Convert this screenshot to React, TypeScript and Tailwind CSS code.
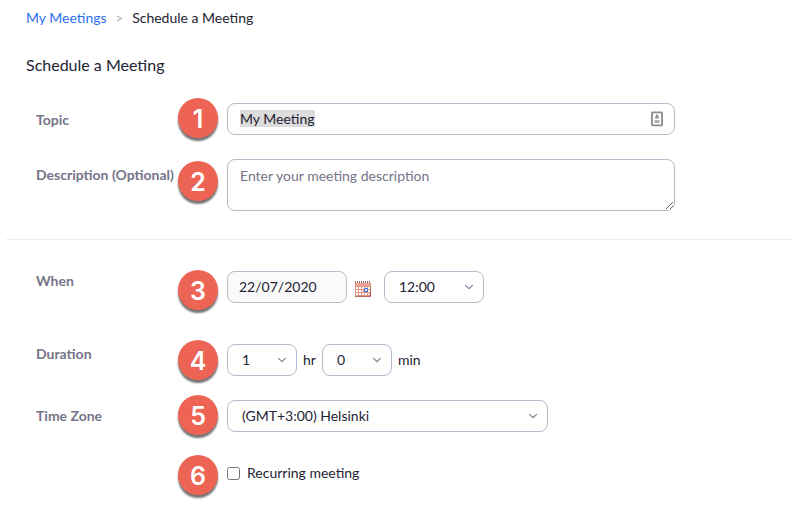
import React, { useState } from 'react';

type FieldRowProps = {
  label?: string;
  step: number;
  rowClass: string;
  labelClass?: string;
  badgeClass?: string;
  fieldClass?: string;
  children: React.ReactNode;
};

function FieldRow({ label, step, rowClass, labelClass = '', badgeClass = '', fieldClass = '', children }: FieldRowProps) {
  return (
    <div className={`flex items-start pl-9 ${rowClass}`}>
      <div className={`w-[142px] shrink-0 whitespace-nowrap text-sm leading-5 font-bold text-[#747487] ${labelClass}`}>
        {label}
      </div>
      <div className={`w-[49px] shrink-0 ${badgeClass}`}>
        <div className="flex size-10 items-center justify-center rounded-full bg-[#ed6454] pt-[3px] font-['Inter','Liberation_Sans',sans-serif] text-[25px] leading-none font-semibold text-white shadow-[0_3px_2px_rgba(0,0,0,0.55)]">
          {step}
        </div>
      </div>
      <div className={fieldClass}>{children}</div>
    </div>
  );
}

function Chevron() {
  return (
    <svg width="10" height="6" viewBox="0 0 10 6" fill="none" stroke="#85859b" strokeWidth="1.3" strokeLinecap="round">
      <path d="M1.5 1.4L5 4.7l3.5-3.3" />
    </svg>
  );
}

function SelectBox({ value, className }: { value: string; className: string }) {
  return (
    <button
      type="button"
      className={`flex h-8 items-center justify-between rounded-lg border border-[#babacc] bg-white pr-[9px] pl-3.5 ${className}`}
    >
      <span>{value}</span>
      <Chevron />
    </button>
  );
}

function ContactIcon() {
  return (
    <svg width="12" height="16" viewBox="0 0 12 16">
      <rect x="1" y="1.4" width="10" height="13" rx="0.5" fill="#fff" stroke="#8b8b8b" strokeWidth="1.8" />
      <path d="M5 3.5h2v2h1v2H4v-2h1z" fill="#8f8f8f" />
      <path d="M3.5 9h5v3h-5z" fill="#b0b0b0" />
    </svg>
  );
}

function CalendarIcon() {
  return (
    <svg width="16" height="16" viewBox="0 0 16 16">
      <rect y="1" width="16" height="15" fill="#e29488" />
      <rect x="1" y="2" width="14" height="3" fill="#eda297" />
      <path d="M0 1h16" stroke="#fff" strokeWidth="2" />
      <path d="M0 1h16" stroke="#8f6a66" strokeWidth="2" strokeDasharray="1 1" />
      <path
        d="M1 6h2v2H1zM4 6h2v2H4zM7 6h2v2H7zM10 6h2v1h-2zM13 6h2v2h-2zM1 9h2v2H1zM4 9h2v2H4zM7 9h1v2H7zM13 9h2v2h-2zM1 12h2v2H1zM4 12h2v2H4zM7 12h2v2H7zM10 12h2v2h-2zM13 12h1v2h-1z"
        fill="#fff"
      />
      <rect x="9.5" y="7.5" width="3" height="3" fill="#dce8ff" stroke="#4a76dc" />
      <path d="M15.5 5v11M0 15.5h16" stroke="#b56c5e" />
    </svg>
  );
}

export default function App() {
  const [recurring, setRecurring] = useState(false);

  return (
    <div className="h-[507px] w-[792px] overflow-hidden bg-white font-['Lato',sans-serif] text-sm text-[#232333]">
      {/* Breadcrumb */}
      <nav className="flex h-9 items-center pl-[26px]">
        <a href="#" className="text-[#2d6ff0]">My Meetings</a>
        <span className="mx-[9px] text-[13px] text-[#a9a9b4]">&gt;</span>
        <span>Schedule a Meeting</span>
      </nav>

      <h1 className="h-[62px] pt-[17px] pl-[26px] text-base leading-6">Schedule a Meeting</h1>

      <FieldRow label="Topic" step={1} rowClass="h-[61px]" labelClass="pt-3" fieldClass="pt-[5px]">
        <div className="flex h-8 w-[448px] items-center justify-between rounded-lg border border-[#babacc] pr-[11px] pl-3">
          <span className="mb-px bg-[#dcdcdc] leading-[17px]">My Meeting</span>
          <ContactIcon />
        </div>
      </FieldRow>

      <FieldRow label="Description (Optional)" step={2} rowClass="h-20" labelClass="pt-1.5" badgeClass="pt-0.5">
        <textarea
          placeholder="Enter your meeting description"
          className="block h-[52px] w-[448px] rounded-lg border border-[#babacc] px-3 py-1.5 leading-5 placeholder:text-[#747487]"
        />
      </FieldRow>

      <hr className="ml-1.5 border-t border-[#ededf4]" />

      <FieldRow label="When" step={3} rowClass="h-[100px] pt-[30px]" labelClass="pt-px" fieldClass="flex items-center pt-px">
        <div className="flex h-8 w-[120px] items-center rounded-lg border border-[#babacc] bg-[#fafafa] pl-[11px]">22/07/2020</div>
        <div className="mx-2 pr-[5px] pt-[3px]">
          <CalendarIcon />
        </div>
        <SelectBox value="12:00" className="w-[100px]" />
      </FieldRow>

      <FieldRow label="Duration" step={4} rowClass="h-[55px]" labelClass="pt-1" fieldClass="flex items-center pt-1">
        <SelectBox value="1" className="w-[70px]" />
        <span className="w-[25px] pl-1.5">hr</span>
        <SelectBox value="0" className="w-[70px]" />
        <span className="pl-1.5">min</span>
      </FieldRow>

      <FieldRow label="Time Zone" step={5} rowClass="h-[60px]" labelClass="pt-[11px]" fieldClass="pt-[5px]">
        <SelectBox value="(GMT+3:00) Helsinki" className="w-[321px]" />
      </FieldRow>

      <FieldRow step={6} rowClass="h-[52px]" fieldClass="pt-2">
        <label className="flex items-center gap-[7px] leading-5">
          <input
            type="checkbox"
            checked={recurring}
            onChange={(e) => setRecurring(e.target.checked)}
            className="size-[13px]"
          />
          Recurring meeting
        </label>
      </FieldRow>
    </div>
  );
}
